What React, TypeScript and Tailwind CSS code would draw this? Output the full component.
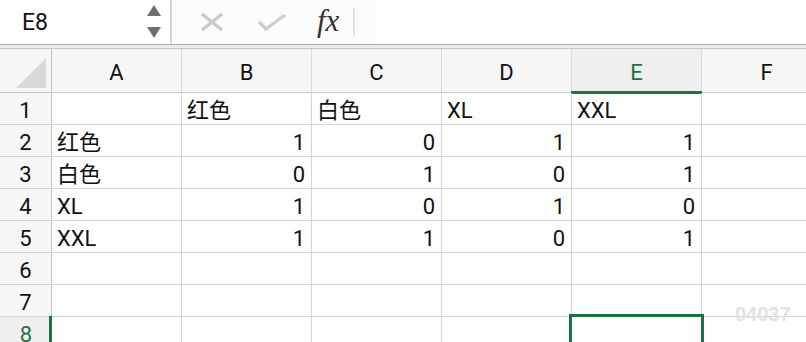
import React from "react";

const cols = ["A", "B", "C", "D", "E", "F"];
type Cell = { v: string; num?: boolean };
const data: Cell[][] = [
  [{ v: "" }, { v: "红色" }, { v: "白色" }, { v: "XL" }, { v: "XXL" }, { v: "" }],
  [{ v: "红色" }, { v: "1", num: true }, { v: "0", num: true }, { v: "1", num: true }, { v: "1", num: true }, { v: "" }],
  [{ v: "白色" }, { v: "0", num: true }, { v: "1", num: true }, { v: "0", num: true }, { v: "1", num: true }, { v: "" }],
  [{ v: "XL" }, { v: "1", num: true }, { v: "0", num: true }, { v: "1", num: true }, { v: "0", num: true }, { v: "" }],
  [{ v: "XXL" }, { v: "1", num: true }, { v: "1", num: true }, { v: "0", num: true }, { v: "1", num: true }, { v: "" }],
  [{ v: "" }, { v: "" }, { v: "" }, { v: "" }, { v: "" }, { v: "" }],
  [{ v: "" }, { v: "" }, { v: "" }, { v: "" }, { v: "" }, { v: "" }],
  [{ v: "" }, { v: "" }, { v: "" }, { v: "" }, { v: "" }, { v: "" }],
];

const font = { fontFamily: "Roboto, 'Noto Sans CJK SC', sans-serif" };

export default function App() {
  return (
    <div className="w-[806px] h-[342px] overflow-hidden bg-white relative" style={font}>
      {/* Formula bar */}
      <div className="h-[44px] flex bg-[#fbfbfb]">
        <div className="w-[170px] flex items-center justify-between pl-[22px] pr-[9px] bg-white">
          <span className="text-[23px] text-[#111] leading-none">E8</span>
          <div className="flex flex-col gap-[11px] -mt-[2px]">
            <svg width="14" height="11" viewBox="0 0 14 11"><path d="M7 0 L14 11 L0 11 Z" fill="#6e6e6e" /></svg>
            <svg width="14" height="11" viewBox="0 0 14 11"><path d="M0 0 L14 0 L7 11 Z" fill="#6e6e6e" /></svg>
          </div>
        </div>
        <div className="w-[2px] bg-[#d6d6d6]" />
        <div className="w-[204px] flex items-center">
          <svg className="ml-[28px]" width="24" height="20" viewBox="0 0 24 20">
            <path d="M2 2 L22 18 M22 2 L2 18" stroke="#c9c9c9" strokeWidth="3.2" />
          </svg>
          <svg className="ml-[33px]" width="30" height="18" viewBox="0 0 30 18">
            <path d="M2 9 L9 16 L28 2" stroke="#cdcdcd" strokeWidth="3.2" fill="none" />
          </svg>
          <span
            className="ml-[30px] text-[31px] italic text-[#333] leading-none -mt-[3px]"
            style={{ fontFamily: "'Liberation Serif', 'DejaVu Serif', serif" }}
          >
            fx
          </span>
          <div className="ml-[14px] w-[2px] h-[28px] bg-[#e3e3e3]" />
        </div>
        <div className="flex-1 bg-white" />
      </div>
      <div className="h-[1px] bg-[#a9a9a9]" />
      <div className="h-[3px] bg-[#ededed]" />
      <div className="h-[1px] bg-[#c4c4c4]" />

      {/* Column header */}
      <div className="flex h-[44px] border-b border-[#c9c9c9] bg-[#f6f6f6]">
        <div className="w-[52px] shrink-0 border-r border-[#c2c2c2] relative">
          <svg className="absolute left-[16px] top-[9px]" width="30" height="30" viewBox="0 0 30 30">
            <path d="M30 0 L30 30 L0 30 Z" fill="#d9d9d9" />
          </svg>
        </div>
        {cols.map((c) => {
          const sel = c === "E";
          return (
            <div
              key={c}
              className={
                sel
                  ? "w-[130px] shrink-0 border-r border-[#dadada] bg-[#efefef] relative flex items-center justify-center pt-[3px] text-[22px] text-[#1e7145]"
                  : "w-[130px] shrink-0 border-r border-[#dadada] flex items-center justify-center pt-[3px] text-[22px] text-[#111]"
              }
            >
              {c}
              {sel && <div className="absolute left-[-1px] right-[-1px] bottom-[-2px] h-[3px] bg-[#1e7145]" />}
            </div>
          );
        })}
      </div>

      {/* Rows */}
      {data.map((row, ri) => {
        const rowSel = ri === 7;
        return (
          <div key={ri} className="flex h-[32px] border-b border-[#d4d4d4]">
            <div
              className={
                rowSel
                  ? "w-[52px] shrink-0 relative bg-[#efefef] flex items-center justify-center pt-[3px] text-[22px] text-[#1e7145]"
                  : "w-[52px] shrink-0 border-r border-[#c2c2c2] bg-[#f7f7f7] flex items-center justify-center pt-[3px] text-[22px] text-[#111]"
              }
            >
              {ri + 1}
              {rowSel && <div className="absolute right-0 top-[-1px] bottom-[-1px] w-[3px] bg-[#1e7145]" />}
            </div>
            {row.map((cell, ci) => {
              const sel = rowSel && ci === 4;
              return (
                <div
                  key={ci}
                  className={
                    cell.num
                      ? "w-[130px] shrink-0 border-r border-[#d4d4d4] flex items-center justify-end pr-[6px] pt-[3px] text-[22px] text-[#111]"
                      : "w-[130px] shrink-0 border-r border-[#d4d4d4] flex items-center justify-start pl-[5px] pt-[3px] text-[22px] text-[#111] relative"
                  }
                >
                  {cell.v}
                  {sel && (
                    <div className="absolute left-[-3px] right-[-3px] top-[-3px] bottom-[-10px] border-[3px] border-[#1e7145]" />
                  )}
                </div>
              );
            })}
          </div>
        );
      })}

      <div
        className="absolute left-[735px] top-[304px] text-[20px] font-bold text-[#e2e2e2] leading-none"
        style={{ fontFamily: "'Liberation Sans', Arial, sans-serif" }}
      >
        04037
      </div>
    </div>
  );
}
